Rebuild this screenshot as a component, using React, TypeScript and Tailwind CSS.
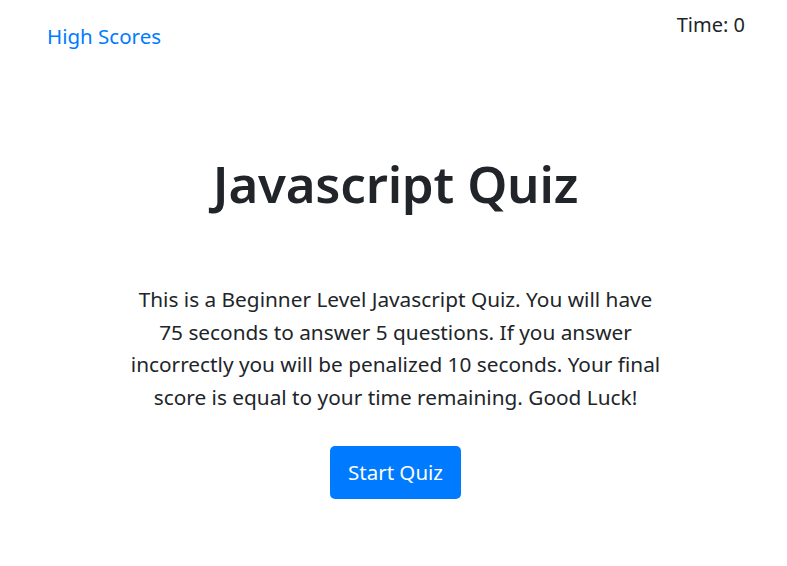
export default function App() {
  return (
    <div
      className="min-h-screen bg-white text-[#212529]"
      style={{ fontFamily: '"Noto Sans", "Open Sans", sans-serif' }}
    >
      {/* Top bar */}
      <div className="flex items-start justify-between pl-[47px] pr-[42px]">
        <a href="#" className="mt-[21px] text-[20.5px] leading-[30px] text-[#007bff]">
          High Scores
        </a>
        <div className="mt-[10px] text-[20px] leading-[30px]">Time: 0</div>
      </div>

      {/* Intro */}
      <div className="flex flex-col items-center pl-[4px] text-center">
        <h1 className="mt-[99px] text-[51px] leading-[67px] font-semibold tracking-[-0.2px]">
          Javascript Quiz
        </h1>
        <p className="mt-[66px] text-[20.8px] leading-[32.5px]">
          <span className="block">This is a Beginner Level Javascript Quiz. You will have</span>
          <span className="block">75 seconds to answer 5 questions. If you answer</span>
          <span className="block">incorrectly you will be penalized 10 seconds. Your final</span>
          <span className="block">score is equal to your time remaining. Good Luck!</span>
        </p>
        <button className="mt-[33px] h-[53px] w-[131px] rounded-[5px] bg-[#007bff] text-[20.5px] text-white">
          Start Quiz
        </button>
      </div>
    </div>
  );
}
